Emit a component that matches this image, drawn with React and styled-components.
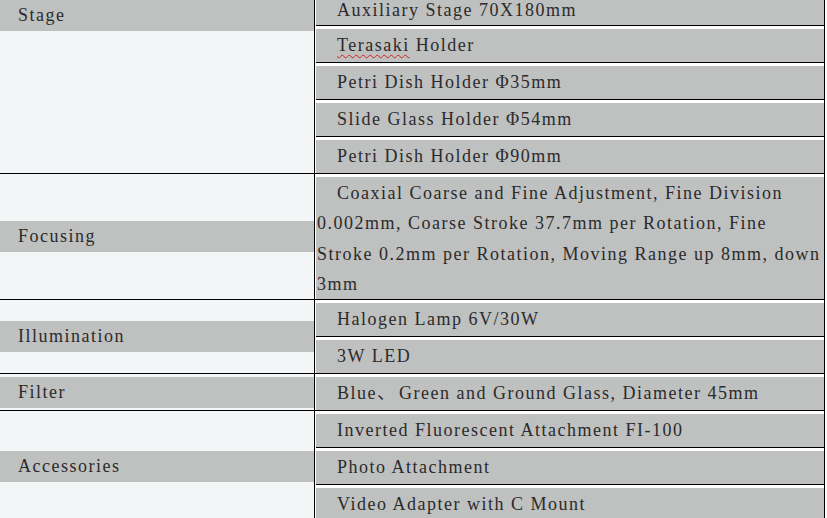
import styled, { createGlobalStyle } from "styled-components";

const GRAY = "#bfc0c0";
const LIGHT = "#f4f5f7";

const Global = createGlobalStyle`
    html, body {
        margin: 0;
        padding: 0;
        background: #fff;
    }
    body {
        font-family: "Liberation Serif", "Noto Sans CJK SC", serif;
        font-size: 18px;
        letter-spacing: 1.5px;
        color: #2b2b2b;
    }
`

const Table = styled.div`
    width: 825px;
    display: flex;
    flex-direction: column;
`

const Row = styled.div`
    display: flex;
    border-bottom: 1px solid #000;
`

const LeftCell = styled.div`
    width: 314px;
    flex: none;
    display: flex;
    align-items: ${props => props.$top ? "flex-start" : "center"};
    background: ${LIGHT};
    border-right: 1px solid #000;
`

const Label = styled.div`
    width: 100%;
    height: 31px;
    line-height: 31px;
    padding-left: 18px;
    box-sizing: border-box;
    background: ${GRAY};
`

const RightCol = styled.div`
    width: 509px;
    flex: none;
    display: flex;
    flex-direction: column;
    background: #fff;
    border-right: 1px solid #000;
`

const Item = styled.div`
    margin: ${props => props.$clip ? "0" : "3px"} 0 0 1px;
    padding: ${props => props.$clip ? "0 0 0 1px" : "1px 0 0 1px"};
    min-height: ${props => props.$clip ? "25px" : "32px"};
    line-height: ${props => props.$clip ? "21px" : "30.25px"};
    text-indent: 20px;
    background: ${GRAY};
    border-bottom: 1px solid #000;

    &:last-child {
        border-bottom: none;
    }
`

const Squiggle = styled.span`
    text-decoration: underline wavy #d62020;
    text-decoration-thickness: 1px;
    text-underline-offset: 3px;
`

const Comma = styled.span`
    letter-spacing: -2px;
`

const specs = [
    {
        label: "Stage",
        top: true,
        items: [
            "Auxiliary Stage 70X180mm",
            <><Squiggle>Terasaki</Squiggle> Holder</>,
            "Petri Dish Holder Φ35mm",
            "Slide Glass Holder Φ54mm",
            "Petri Dish Holder Φ90mm",
        ],
    },
    {
        label: "Focusing",
        items: [
            "Coaxial Coarse and Fine Adjustment, Fine Division 0.002mm, Coarse Stroke 37.7mm per Rotation, Fine Stroke 0.2mm per Rotation, Moving Range up 8mm, down 3mm",
        ],
    },
    {
        label: "Illumination",
        items: ["Halogen Lamp 6V/30W", "3W LED"],
    },
    {
        label: "Filter",
        items: [<>Blue<Comma>、</Comma> Green and Ground Glass, Diameter 45mm</>],
    },
    {
        label: "Accessories",
        items: [
            "Inverted Fluorescent Attachment FI-100",
            "Photo Attachment",
            "Video Adapter with C Mount",
        ],
    },
];

export default function App() {
    return (
        <>
            <Global />
            <Table>
                {specs.map((spec, rowIdx) => (
                    <Row key={spec.label}>
                        <LeftCell $top={spec.top}>
                            <Label>{spec.label}</Label>
                        </LeftCell>
                        <RightCol>
                            {spec.items.map((item, idx) => (
                                <Item key={idx} $clip={rowIdx === 0 && idx === 0}>{item}</Item>
                            ))}
                        </RightCol>
                    </Row>
                ))}
            </Table>
        </>
    );
}
